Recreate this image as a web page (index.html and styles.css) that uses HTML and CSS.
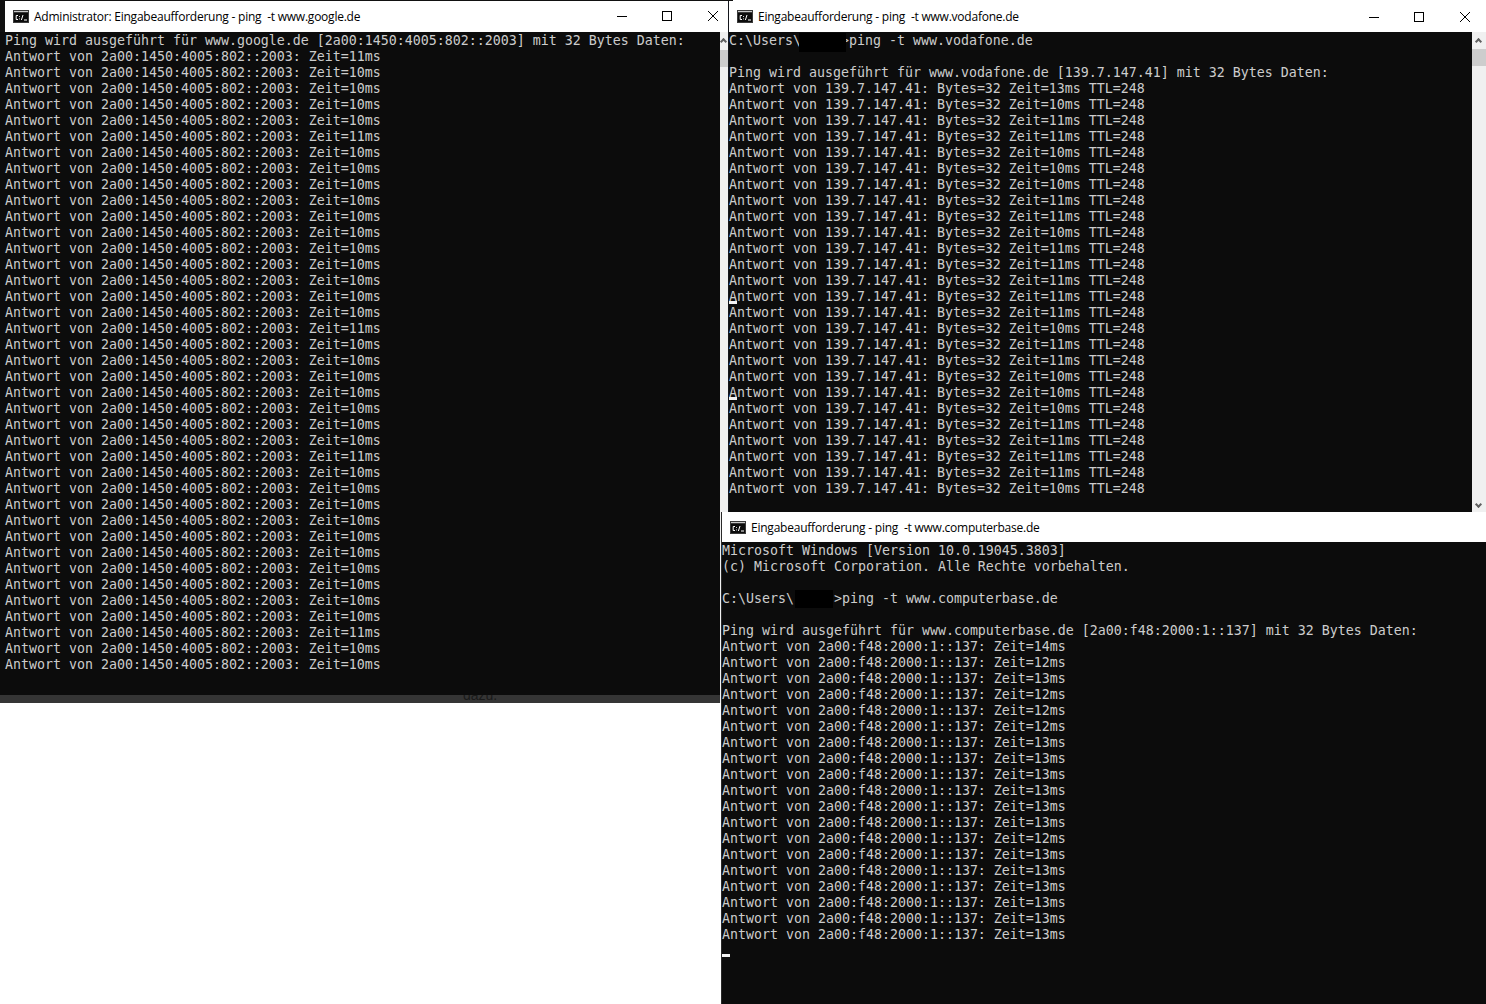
FILE: index.html
```html
<!DOCTYPE html>
<html lang="de">
<head>
<meta charset="utf-8">
<title>Ping</title>
<link rel="stylesheet" href="styles.css">
</head>
<body>
<svg class="defs" width="0" height="0" aria-hidden="true">
  <symbol id="cmd" viewBox="0 0 16 13">
    <rect width="16" height="13" fill="#3a3a3a"/>
    <rect x="1" y="1" width="14" height="1" fill="#c8c8c8"/>
    <rect x="1" y="3" width="14" height="9" fill="#0c0c0c"/>
    <path d="M5 5.5H3.2V9.5H5M6.5 6v.8M6.5 8.5v.8M10 5l-1.6 5M11 10h3" fill="none" stroke="#fff" stroke-width="1"/>
  </symbol>
  <symbol id="min" viewBox="0 0 10 10"><path d="M0 5.5H10" stroke="#000" fill="none"/></symbol>
  <symbol id="max" viewBox="0 0 10 10"><rect x=".5" y=".5" width="9" height="9" stroke="#000" fill="none"/></symbol>
  <symbol id="close" viewBox="0 0 10 10"><path d="M0 0L10 10M10 0L0 10" stroke="#000" fill="none"/></symbol>
</svg>

<section class="win win-google">
  <header class="title">
    <svg class="icon"><use href="#cmd"/></svg>
    <span class="title-text">Administrator: Eingabeaufforderung - ping&nbsp; -t www.google.de</span>
    <span class="controls">
      <svg class="ctl"><use href="#min"/></svg>
      <svg class="ctl"><use href="#max"/></svg>
      <svg class="ctl"><use href="#close"/></svg>
    </span>
  </header>
  <div class="row">
    <div class="col">
<pre class="console console-google">Ping wird ausgeführt für www.google.de [2a00:1450:4005:802::2003] mit 32 Bytes Daten:
Antwort von 2a00:1450:4005:802::2003: Zeit=11ms
Antwort von 2a00:1450:4005:802::2003: Zeit=10ms
Antwort von 2a00:1450:4005:802::2003: Zeit=10ms
Antwort von 2a00:1450:4005:802::2003: Zeit=10ms
Antwort von 2a00:1450:4005:802::2003: Zeit=10ms
Antwort von 2a00:1450:4005:802::2003: Zeit=11ms
Antwort von 2a00:1450:4005:802::2003: Zeit=10ms
Antwort von 2a00:1450:4005:802::2003: Zeit=10ms
Antwort von 2a00:1450:4005:802::2003: Zeit=10ms
Antwort von 2a00:1450:4005:802::2003: Zeit=10ms
Antwort von 2a00:1450:4005:802::2003: Zeit=10ms
Antwort von 2a00:1450:4005:802::2003: Zeit=10ms
Antwort von 2a00:1450:4005:802::2003: Zeit=10ms
Antwort von 2a00:1450:4005:802::2003: Zeit=10ms
Antwort von 2a00:1450:4005:802::2003: Zeit=10ms
Antwort von 2a00:1450:4005:802::2003: Zeit=10ms
Antwort von 2a00:1450:4005:802::2003: Zeit=10ms
Antwort von 2a00:1450:4005:802::2003: Zeit=11ms
Antwort von 2a00:1450:4005:802::2003: Zeit=10ms
Antwort von 2a00:1450:4005:802::2003: Zeit=10ms
Antwort von 2a00:1450:4005:802::2003: Zeit=10ms
Antwort von 2a00:1450:4005:802::2003: Zeit=10ms
Antwort von 2a00:1450:4005:802::2003: Zeit=10ms
Antwort von 2a00:1450:4005:802::2003: Zeit=10ms
Antwort von 2a00:1450:4005:802::2003: Zeit=10ms
Antwort von 2a00:1450:4005:802::2003: Zeit=11ms
Antwort von 2a00:1450:4005:802::2003: Zeit=10ms
Antwort von 2a00:1450:4005:802::2003: Zeit=10ms
Antwort von 2a00:1450:4005:802::2003: Zeit=10ms
Antwort von 2a00:1450:4005:802::2003: Zeit=10ms
Antwort von 2a00:1450:4005:802::2003: Zeit=10ms
Antwort von 2a00:1450:4005:802::2003: Zeit=10ms
Antwort von 2a00:1450:4005:802::2003: Zeit=10ms
Antwort von 2a00:1450:4005:802::2003: Zeit=10ms
Antwort von 2a00:1450:4005:802::2003: Zeit=10ms
Antwort von 2a00:1450:4005:802::2003: Zeit=10ms
Antwort von 2a00:1450:4005:802::2003: Zeit=11ms
Antwort von 2a00:1450:4005:802::2003: Zeit=10ms
Antwort von 2a00:1450:4005:802::2003: Zeit=10ms</pre>
      <div class="band"><span class="behind">dazu.</span></div>
    </div>
    <div class="scroll scroll-google"><span class="arrow-up"></span><span class="thumb"></span></div>
  </div>
</section>

<section class="win win-vodafone">
  <header class="title">
    <svg class="icon"><use href="#cmd"/></svg>
    <span class="title-text">Eingabeaufforderung - ping&nbsp; -t www.vodafone.de</span>
    <span class="controls">
      <svg class="ctl"><use href="#min"/></svg>
      <svg class="ctl"><use href="#max"/></svg>
      <svg class="ctl"><use href="#close"/></svg>
    </span>
  </header>
  <div class="row">
    <div class="col">
<pre class="console">C:\Users\     &gt;ping -t www.vodafone.de

Ping wird ausgeführt für www.vodafone.de [139.7.147.41] mit 32 Bytes Daten:
Antwort von 139.7.147.41: Bytes=32 Zeit=13ms TTL=248
Antwort von 139.7.147.41: Bytes=32 Zeit=10ms TTL=248
Antwort von 139.7.147.41: Bytes=32 Zeit=11ms TTL=248
Antwort von 139.7.147.41: Bytes=32 Zeit=11ms TTL=248
Antwort von 139.7.147.41: Bytes=32 Zeit=10ms TTL=248
Antwort von 139.7.147.41: Bytes=32 Zeit=10ms TTL=248
Antwort von 139.7.147.41: Bytes=32 Zeit=10ms TTL=248
Antwort von 139.7.147.41: Bytes=32 Zeit=11ms TTL=248
Antwort von 139.7.147.41: Bytes=32 Zeit=11ms TTL=248
Antwort von 139.7.147.41: Bytes=32 Zeit=10ms TTL=248
Antwort von 139.7.147.41: Bytes=32 Zeit=11ms TTL=248
Antwort von 139.7.147.41: Bytes=32 Zeit=11ms TTL=248
Antwort von 139.7.147.41: Bytes=32 Zeit=11ms TTL=248
Antwort von 139.7.147.41: Bytes=32 Zeit=11ms TTL=248
Antwort von 139.7.147.41: Bytes=32 Zeit=11ms TTL=248
Antwort von 139.7.147.41: Bytes=32 Zeit=10ms TTL=248
Antwort von 139.7.147.41: Bytes=32 Zeit=11ms TTL=248
Antwort von 139.7.147.41: Bytes=32 Zeit=11ms TTL=248
Antwort von 139.7.147.41: Bytes=32 Zeit=10ms TTL=248
Antwort von 139.7.147.41: Bytes=32 Zeit=10ms TTL=248
Antwort von 139.7.147.41: Bytes=32 Zeit=10ms TTL=248
Antwort von 139.7.147.41: Bytes=32 Zeit=11ms TTL=248
Antwort von 139.7.147.41: Bytes=32 Zeit=11ms TTL=248
Antwort von 139.7.147.41: Bytes=32 Zeit=11ms TTL=248
Antwort von 139.7.147.41: Bytes=32 Zeit=11ms TTL=248
Antwort von 139.7.147.41: Bytes=32 Zeit=10ms TTL=248<span class="redact redact-v"></span><span class="cursor cursor-v1"></span><span class="cursor cursor-v2"></span></pre>
    </div>
    <div class="scroll scroll-vodafone"><span class="arrow-up"></span><span class="thumb"></span><span class="arrow-down"></span></div>
  </div>
</section>

<section class="win win-computerbase">
  <header class="title">
    <svg class="icon"><use href="#cmd"/></svg>
    <span class="title-text">Eingabeaufforderung - ping&nbsp; -t www.computerbase.de</span>
  </header>
  <div class="row">
    <div class="col">
<pre class="console">Microsoft Windows [Version 10.0.19045.3803]
(c) Microsoft Corporation. Alle Rechte vorbehalten.

C:\Users\     &gt;ping -t www.computerbase.de

Ping wird ausgeführt für www.computerbase.de [2a00:f48:2000:1::137] mit 32 Bytes Daten:
Antwort von 2a00:f48:2000:1::137: Zeit=14ms
Antwort von 2a00:f48:2000:1::137: Zeit=12ms
Antwort von 2a00:f48:2000:1::137: Zeit=13ms
Antwort von 2a00:f48:2000:1::137: Zeit=12ms
Antwort von 2a00:f48:2000:1::137: Zeit=12ms
Antwort von 2a00:f48:2000:1::137: Zeit=12ms
Antwort von 2a00:f48:2000:1::137: Zeit=13ms
Antwort von 2a00:f48:2000:1::137: Zeit=13ms
Antwort von 2a00:f48:2000:1::137: Zeit=13ms
Antwort von 2a00:f48:2000:1::137: Zeit=13ms
Antwort von 2a00:f48:2000:1::137: Zeit=13ms
Antwort von 2a00:f48:2000:1::137: Zeit=13ms
Antwort von 2a00:f48:2000:1::137: Zeit=12ms
Antwort von 2a00:f48:2000:1::137: Zeit=13ms
Antwort von 2a00:f48:2000:1::137: Zeit=13ms
Antwort von 2a00:f48:2000:1::137: Zeit=13ms
Antwort von 2a00:f48:2000:1::137: Zeit=13ms
Antwort von 2a00:f48:2000:1::137: Zeit=13ms
Antwort von 2a00:f48:2000:1::137: Zeit=13ms<span class="redact redact-c"></span><span class="cursor cursor-c"></span></pre>
    </div>
  </div>
</section>
</body>
</html>
```
FILE: styles.css
```css
html, body {
  margin: 0;
  padding: 0;
  background: #fff;
}

body {
  width: 1486px;
  height: 1004px;
  position: relative;
  overflow: hidden;
}

.defs {
  position: absolute;
}

.win {
  position: absolute;
  display: flex;
  flex-direction: column;
  background: #0c0c0c;
}

.win-google {
  left: 0;
  top: 0;
  width: 733px;
  height: 703px;
  padding-top: 1px;
  background: #111;
  box-sizing: border-box;
}

.win-vodafone {
  left: 728px;
  top: 1px;
  width: 758px;
  height: 511px;
  border-left: 1px solid #14161c;
  box-sizing: border-box;
}

.win-computerbase {
  left: 721px;
  top: 512px;
  width: 765px;
  height: 492px;
  border-left: 1px solid #2a2a2a;
  box-sizing: border-box;
}

.title {
  display: flex;
  align-items: center;
  flex: none;
  height: 31px;
  background: #fff;
  font-family: "Open Sans", "Noto Sans", sans-serif;
  font-size: 12px;
  color: #000;
  white-space: nowrap;
}

.win-google .title {
  margin-left: 5px;
  padding-left: 8px;
  padding-right: 15px;
}

.win-vodafone .title {
  padding-left: 8px;
  padding-right: 16px;
}

.win-computerbase .title {
  height: 30px;
  padding-left: 8px;
}

.icon {
  flex: none;
  width: 16px;
  height: 13px;
  margin-right: 5px;
}

.title-text {
  letter-spacing: -0.23px;
}

.controls {
  display: flex;
  gap: 35px;
  margin-left: auto;
}

.win-google .controls {
  margin-bottom: 2px;
}

.ctl {
  display: block;
  width: 10px;
  height: 10px;
}

.ctl:nth-child(2) {
  margin-right: 1px;
}

.row {
  display: flex;
  flex: 1;
  min-height: 0;
}

.col {
  display: flex;
  flex-direction: column;
  flex: 1;
  min-width: 0;
}

.console {
  position: relative;
  flex: 1;
  margin: 0;
  padding-top: 1px;
  background: #0c0c0c;
  color: #cccccc;
  font-family: "DejaVu Sans Mono", "Liberation Mono", monospace;
  font-size: 13.29px;
  line-height: 16px;
  white-space: pre;
}

.console-google {
  padding-left: 5px;
}

.band {
  position: relative;
  flex: none;
  height: 8px;
  background: #353535;
  overflow: hidden;
}

.behind {
  position: absolute;
  left: 463px;
  top: -8px;
  font-family: "Liberation Sans", sans-serif;
  font-size: 14px;
  line-height: 16px;
  color: #1a1a1a;
}

.scroll {
  position: relative;
  flex: none;
  background: #f0f0f0;
}

.scroll-google {
  width: 13px;
}

.scroll-vodafone {
  width: 14px;
}

.thumb {
  position: absolute;
  left: 0;
  top: 17px;
  width: 100%;
  height: 17px;
  background: #cdcdcd;
}

.scroll-google .thumb {
  top: 18px;
}

.arrow-up,
.arrow-down {
  position: absolute;
  width: 5px;
  height: 5px;
  left: 4px;
  border-left: 2px solid #606060;
  border-top: 2px solid #606060;
  box-sizing: border-box;
  transform: rotate(45deg);
}

.arrow-up {
  top: 7px;
}

.arrow-down {
  bottom: 5px;
  transform: rotate(225deg);
}

.scroll-google .arrow-up {
  left: 1px;
}

.redact {
  position: absolute;
  background: #000;
}

.redact-v {
  left: 70px;
  top: 1px;
  width: 47px;
  height: 19px;
}

.redact-c {
  left: 73px;
  top: 48px;
  width: 38px;
  height: 18px;
}

.cursor {
  position: absolute;
  left: 0;
  width: 8px;
  height: 3px;
  background: #f2f2f2;
}

.cursor-v1 {
  top: 269px;
}

.cursor-v2 {
  top: 365px;
}

.cursor-c {
  top: 412px;
}
```
